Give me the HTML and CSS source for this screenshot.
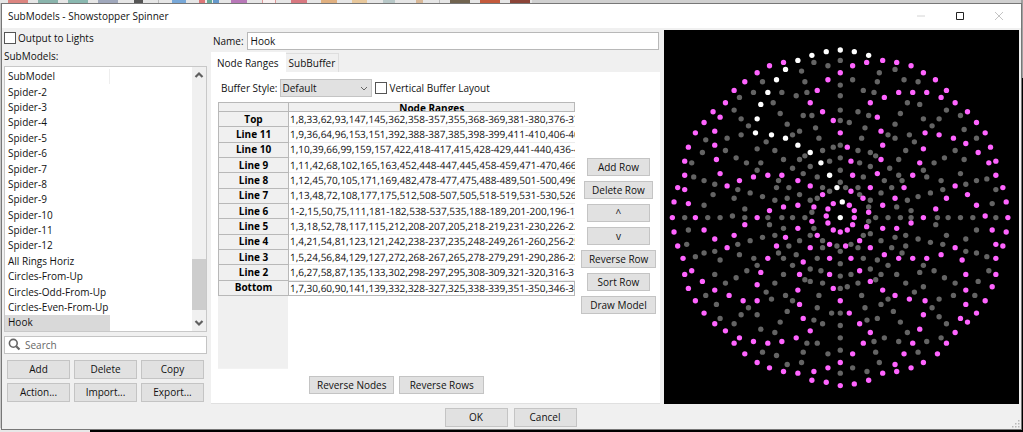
FILE: index.html
```html
<!DOCTYPE html>
<html lang="en">
<head>
<meta charset="utf-8">
<title>SubModels - Showstopper Spinner</title>
<link rel="stylesheet" href="styles.css">
</head>
<body>
<div class="desktop">
  <div class="backdrop" aria-hidden="true">
    <div class="toolstrip">
      <i class="chip red"></i><i class="chip blue"></i><i class="chip teal"></i><i class="chip slate"></i><i class="chip dark"></i><i class="sep"></i><i class="chip sky"></i><i class="chip mixed"></i><i class="chip violet"></i><i class="chip white"></i><i class="chip rose"></i><i class="chip tan"></i><i class="chip sand"></i><i class="chip pale"></i><i class="chip pencil"></i><i class="sep"></i><i class="chip olive"></i><i class="chip orange"></i><i class="chip brick"></i>
    </div>
  </div>
  <main class="dialog">
    <header class="titlebar">
      <h1 class="title">SubModels - Showstopper Spinner</h1>
      <button class="winbtn" aria-label="Minimize"><svg width="10" height="10" viewBox="0 0 10 10"><path d="M1 5h8" stroke="#d4d4d4"/></svg></button>
      <button class="winbtn" aria-label="Maximize"><svg width="10" height="10" viewBox="0 0 10 10"><path d="M1.5 1.5h7v7h-7z" fill="none" stroke="#222"/></svg></button>
      <button class="winbtn" aria-label="Close"><svg width="10" height="10" viewBox="0 0 10 10"><path d="M1 1l8 8M9 1l-8 8" stroke="#c4c4c4"/></svg></button>
    </header>
    <div class="content">
      <section class="models">
        <label class="check"><input type="checkbox" class="box">Output to Lights</label>
        <div class="caption" id="models-caption">SubModels:</div>
        <div class="listbox">
          <ul class="items" role="listbox" aria-labelledby="models-caption">
            <li role="option">SubModel</li>
            <li role="option">Spider-2</li>
            <li role="option">Spider-3</li>
            <li role="option">Spider-4</li>
            <li role="option">Spider-5</li>
            <li role="option">Spider-6</li>
            <li role="option">Spider-7</li>
            <li role="option">Spider-8</li>
            <li role="option">Spider-9</li>
            <li role="option">Spider-10</li>
            <li role="option">Spider-11</li>
            <li role="option">Spider-12</li>
            <li role="option">All Rings Horiz</li>
            <li role="option">Circles-From-Up</li>
            <li role="option">Circles-Odd-From-Up</li>
            <li role="option">Circles-Even-From-Up</li>
            <li role="option" aria-selected="true" class="selected">Hook</li>
          </ul>
          <div class="scrollbar">
            <svg width="10" height="8" viewBox="0 0 10 8"><path d="M1.5 6L5 2.5 8.500 6" fill="none" stroke="#606060" stroke-width="2.200"/></svg>
            <div class="thumb"></div>
            <svg width="10" height="8" viewBox="0 0 10 8"><path d="M1.500 2L5 5.500 8.500 2" fill="none" stroke="#606060" stroke-width="2.200"/></svg>
          </div>
        </div>
        <div class="search">
          <svg width="13" height="13" viewBox="0 0 13 13"><circle cx="5.300" cy="5.300" r="3.900" fill="none" stroke="#666" stroke-width="1.600"/><path d="M8.200 8.200L11.500 11.500" stroke="#666" stroke-width="2.200"/></svg>
          <input type="text" class="search-input" placeholder="Search" aria-label="Search">
        </div>
        <div class="actions">
          <button class="btn">Add</button><button class="btn">Delete</button><button class="btn">Copy</button>
          <button class="btn">Action...</button><button class="btn">Import...</button><button class="btn">Export...</button>
        </div>
      </section>

      <section class="editor">
        <div class="name-row"><label for="name">Name:</label><input type="text" id="name" class="name-input" value="Hook"></div>
        <div class="tabs" role="tablist">
          <button class="tab active" role="tab" aria-selected="true">Node Ranges</button>
          <button class="tab" role="tab" aria-selected="false">SubBuffer</button>
        </div>
        <div class="panel">
          <div class="options">
            <label for="style">Buffer Style:</label>
            <div class="select-wrap">
              <select id="style" class="select"><option>Default</option></select>
              <svg class="caret" width="8" height="5" viewBox="0 0 8 5"><path d="M1 1l3 3 3-3" fill="none" stroke="#666"/></svg>
            </div>
            <label class="check"><input type="checkbox" class="box">Vertical Buffer Layout</label>
          </div>
          <div class="ranges">
            <div class="grid">
              <table class="nodes">
                <thead><tr><th class="rowcol"></th><th><div class="colname">Node Ranges</div></th></tr></thead>
                <tbody>
                  <tr><th>Top</th><td>1,8,33,62,93,147,145,362,358-357,355,368-369,381-380,376-377,</td></tr>
                  <tr><th>Line 11</th><td>1,9,36,64,96,153,151,392,388-387,385,398-399,411-410,406-407,</td></tr>
                  <tr><th>Line 10</th><td>1,10,39,66,99,159,157,422,418-417,415,428-429,441-440,436-437</td></tr>
                  <tr><th>Line 9</th><td>1,11,42,68,102,165,163,452,448-447,445,458-459,471-470,466-467</td></tr>
                  <tr><th>Line 8</th><td>1,12,45,70,105,171,169,482,478-477,475,488-489,501-500,496-497</td></tr>
                  <tr><th>Line 7</th><td>1,13,48,72,108,177,175,512,508-507,505,518-519,531-530,526-527</td></tr>
                  <tr><th>Line 6</th><td>1-2,15,50,75,111,181-182,538-537,535,188-189,201-200,196-197</td></tr>
                  <tr><th>Line 5</th><td>1,3,18,52,78,117,115,212,208-207,205,218-219,231-230,226-227,</td></tr>
                  <tr><th>Line 4</th><td>1,4,21,54,81,123,121,242,238-237,235,248-249,261-260,256-257,</td></tr>
                  <tr><th>Line 3</th><td>1,5,24,56,84,129,127,272,268-267,265,278-279,291-290,286-287,</td></tr>
                  <tr><th>Line 2</th><td>1,6,27,58,87,135,133,302,298-297,295,308-309,321-320,316-317,</td></tr>
                  <tr><th>Bottom</th><td class="current">1,7,30,60,90,141,139,332,328-327,325,338-339,351-350,346-347,</td></tr>
                </tbody>
              </table>
            </div>
            <div class="row-tools">
              <button class="btn">Add Row</button>
              <button class="btn wide">Delete Row</button>
              <button class="btn">^</button>
              <button class="btn">v</button>
              <button class="btn widest">Reverse Row</button>
              <button class="btn">Sort Row</button>
              <button class="btn widest">Draw Model</button>
            </div>
          </div>
          <div class="reverse">
            <button class="btn">Reverse Nodes</button>
            <button class="btn">Reverse Rows</button>
          </div>
        </div>
      </section>

      <section class="preview">
        <svg id="model" class="model" viewBox="0 0 1062 1119" role="img" aria-label="Model preview"></svg>
      </section>
    </div>
    <footer class="footer">
      <button class="btn">OK</button>
      <button class="btn">Cancel</button>
      <svg class="grip" width="8" height="8" viewBox="0 0 8 8" fill="#b8b8b8"><path d="M6 0h1.500v1.500H6zM3 3h1.500v1.500H3zM6 3h1.500v1.500H6zM0 6h1.500v1.500H0zM3 6h1.500v1.500H3zM6 6h1.500v1.500H6z"/></svg>
    </footer>
  </main>
</div>
<script src="model.js"></script>
</body>
</html>
```
FILE: styles.css
```css
* { box-sizing: border-box; }

body {
  margin: 0;
  font-family: "Open Sans", "Noto Sans", sans-serif;
  font-size: 10px;
  line-height: 14px;
  color: #111;
}

button, input, select { font: inherit; color: inherit; margin: 0; }

.desktop {
  position: relative;
  display: flex;
  min-height: 100vh;
  padding: 3px 1px;
}

.backdrop {
  position: absolute;
  inset: 0;
  background:
    linear-gradient(#a0a0a0, #a0a0a0) right top / 2px 78px no-repeat,
    linear-gradient(#e8e8e8, #e8e8e8) left bottom / 90px 5px no-repeat,
    linear-gradient(#c8c8c8, #c8c8c8) left top / 3px 100% no-repeat,
    linear-gradient(#d0d0d0, #d0d0d0) top / 100% 4px no-repeat,
    #000;
}

.toolstrip { display: flex; gap: 10px; width: max-content; padding: 0 2px 0 8px; background: #e6e6e6; }
.chip { width: 20px; height: 3px; }
.sep { width: 1px; height: 3px; background: #bbb; }
.red { background: #dc8580; }
.blue { background: #8ab4ac; }
.teal { background: #8ab8b0; }
.slate { background: #a0a8bc; }
.dark { background: linear-gradient(#555, #555) center / 9px 100% no-repeat; }
.sky { background: linear-gradient(#78a8d8, #78a8d8) center / 14px 100% no-repeat; }
.mixed { background: linear-gradient(90deg, #d77 30%, #eee 30% 40%, #6a9 40% 65%, #eee 65% 72%, #69c 72%); }
.violet { background: linear-gradient(#b878b8, #b878b8) center / 16px 100% no-repeat; }
.white { background: linear-gradient(90deg, #e6e6e6 3px, #e09898 3px 4px, #f8f0f0 4px 16px, #e09898 16px 17px, #e6e6e6 17px); }
.rose { background: linear-gradient(#d87880, #d87880) center / 16px 100% no-repeat; }
.tan { background: linear-gradient(#e0b080, #e0b080) center / 16px 100% no-repeat; }
.sand { background: linear-gradient(#e8c89c, #e8c89c) center / 15px 100% no-repeat; }
.pale { background: linear-gradient(#b8c8c8, #b8c8c8) center / 12px 100% no-repeat; }
.pencil { background: linear-gradient(#d8b898, #d8b898) center / 7px 100% no-repeat; }
.olive { background: #716450; }
.orange { background: #c45a3c; }
.brick { background: #8c4438; }

.dialog {
  position: relative;
  flex: 1;
  min-width: 0;
  display: flex;
  flex-direction: column;
  background: #f0f0f0;
  border: 1px solid #777;
}

.titlebar { display: flex; align-items: center; height: 24px; padding-left: 6px; background: #fff; }
.title { flex: 1; margin: 0; font-size: 10px; font-weight: 400; }
.winbtn { display: flex; align-items: center; justify-content: center; width: 39px; height: 24px; padding: 0 5px 0 0; border: 0; background: none; }

.content {
  flex: 1;
  display: grid;
  grid-template-columns: 203px minmax(0, 450fr) minmax(0, 355fr);
  gap: 4px;
  padding: 2px 2px 0;
}

.btn {
  min-width: 63px;
  height: 18px;
  padding: 0 7px;
  line-height: 14px;
  white-space: nowrap;
  background: #e1e1e1;
  border: 1px solid #c4c4c4;
}

.check { display: flex; align-items: center; gap: 2px; }
.box { appearance: none; width: 12px; height: 12px; background: #fff; border: 1px solid #555; }

.models { display: flex; flex-direction: column; }
.models .check { height: 16px; }
.caption { padding: 3px 0; line-height: 14px; }

.listbox { flex: 1; display: flex; border: 1px solid #c8c8c8; background: #fff; }
.items { flex: 1; display: grid; grid-auto-rows: minmax(0, 1fr); margin: 0; padding: 2px 0 0; list-style: none; }
.items li { display: flex; align-items: center; width: 105px; padding-left: 3px; line-height: 15px; white-space: nowrap; }
.items li:first-child { border-right: 1px solid #eee; }
.items .selected { background: #d9d9d9; }
.scrollbar { display: flex; flex-direction: column; align-items: center; width: 14px; padding: 4px 0; background: #f0f0f0; }
.thumb { width: 14px; height: 51px; margin: auto 0 9px; background: #cdcdcd; }

.search { display: flex; align-items: center; gap: 4px; height: 18px; margin-top: 4px; padding: 0 3px; background: #fff; border: 1px solid #c4c4c4; }
.search-input { flex: 1; min-width: 0; height: 14px; padding: 0; border: 0; outline: 0; background: none; }
.search-input::placeholder { color: #666; opacity: 1; }

.actions { display: grid; grid-template-columns: repeat(3, 1fr); gap: 4px; padding: 6px 3px 2px; }
.actions .btn { height: 19px; min-width: 0; }

.editor { display: flex; flex-direction: column; }
.name-row { display: flex; align-items: center; gap: 3px; padding: 2px 1px 0 2px; }
.name-input { flex: 1; min-width: 0; height: 18px; padding: 0 3px; background: #fff; border: 1px solid #b8b8b8; }

.tabs { display: flex; align-items: flex-end; padding-top: 2px; }
.tab { height: 19px; padding: 0 3px; line-height: 14px; background: #f0f0f0; border: 1px solid #dedede; border-bottom: 0; border-left: 0; white-space: nowrap; }
.tab.active { height: 20px; padding: 0 6px; background: #fff; border-color: #fff; }

.panel { flex: 1; display: flex; flex-direction: column; padding: 7px 4px 9px 7px; background: #fff; border-bottom: 1px solid #e0e0e0; }
.options { display: flex; align-items: center; gap: 3px; padding-left: 3px; }
.select-wrap { position: relative; display: flex; width: 92px; }
.select { appearance: none; width: 100%; height: 18px; padding: 0 1px; background: #e1e1e1; border: 1px solid #c4c4c4; border-radius: 0; }
.caret { position: absolute; right: 4px; top: 7px; }

.ranges { flex: 1; display: flex; gap: 5px; padding-top: 5px; }
.grid { flex: 1; min-width: 0; background: linear-gradient(#f0f0f0, #f0f0f0) left / 70px 100% no-repeat; }

.nodes { width: 100%; height: 194px; table-layout: fixed; border-collapse: separate; border-spacing: 0; border-top: 1px solid #b8b8b8; border-left: 1px solid #b8b8b8; }
.nodes th { padding: 0; height: 15px; line-height: 13px; font-weight: 700; color: #000; background: #f0f0f0; border-right: 1px solid #b8b8b8; border-bottom: 1px solid #b8b8b8; }
.nodes .rowcol { width: 70px; }
.nodes thead th { height: 9px; }
.colname { height: 8px; line-height: 10px; overflow: hidden; }
.nodes td { padding: 0 1px; line-height: 13px; background: #fff; border-bottom: 1px solid #ececec; overflow: hidden; white-space: nowrap; text-rendering: geometricPrecision; }
.nodes .current { border: 1px solid #b8b8b8; border-left: 0; }

.row-tools { display: flex; flex-direction: column; align-items: center; justify-content: center; gap: 5px; width: 76px; padding-top: 2px; }
.row-tools .wide { width: 69px; }
.row-tools .widest { width: 75px; }
.reverse { display: flex; justify-content: center; gap: 5px; padding: 7px 81px 0 0; }
.reverse .btn { width: 85px; padding: 0; }

.preview { display: flex; background: #000; }
.model { flex: 1; min-width: 0; display: block; }

.footer { position: relative; display: flex; justify-content: center; gap: 6px; padding: 4px 2px 2px 0; }
.footer .btn { height: 19px; }
.grip { position: absolute; right: 1px; bottom: 1px; }
```
FILE: model.js
```js
// Node positions of the model, listed per quadrant with the quadrant's origin.
const quadrants = [
  { x: -12, y: 0,
    on: "370,97 328,107 291,128 254,155 222,181 196,218 159,245 180,261 132,277 106,308 164,303 164,345 85,351 169,388 74,393 74,435 180,430 53,472 74,478 42,515 85,520 37,562 106,562 201,467 238,451 280,440 323,435 365,435 413,451 450,467 487,493 519,520 328,541 370,530 413,525 461,530 503,536 498,557 291,562 503,149 471,181 450,218 487,245 519,271",
    lit: "413,91 455,76 498,65 376,118 349,149 323,187 302,223 291,266 286,308 334,314 376,324 413,345 450,367 482,398 508,435 530,472",
    off: "461,97 503,107 424,123 434,155 307,155 280,187 238,202 365,187 408,197 440,187 339,218 222,240 360,250 429,256 455,256 243,266 265,287 381,282 466,293 418,303 243,314 397,314 201,324 137,329 318,335 476,324 519,351 487,361 127,367 196,361 291,356 344,361 228,383 434,377 418,388 370,388 95,398 259,398 302,398 508,393 450,409 397,414 291,420 429,430 471,440 101,440 132,451 164,462 355,451 349,472 386,472 487,472 508,483 159,493 222,504 233,478 270,488 307,499 418,493 381,504 344,510 450,510 471,504 132,525 254,536 455,546 217,557 74,562 143,562 180,562 254,562 323,562 365,562 397,562 434,562" },
  { x: 522, y: 0,
    on: "6,128 43,107 85,97 133,91 175,97 218,107 255,128 291,149 324,181 308,202 350,218 387,245 414,277 440,308 456,351 472,393 451,398 419,367 382,340 345,324 302,314 260,308 181,187 223,187 265,187 138,202 96,218 117,261 128,303 133,345 128,388 117,430 96,472 74,504 6,308 27,351 38,393 43,435 38,483 33,525 48,541 48,562 91,546 255,356 244,398 223,435 197,472 170,504 133,525 472,435 493,472 503,515 508,562 440,557 414,525 387,493 350,467 324,504 292,536 255,562",
    lit: "6,60 48,65 91,76 12,515 6,562",
    off: "6,91 6,165 6,197 6,240 6,271 6,345 6,383 6,420 6,456 43,149 75,181 107,187 117,155 123,128 170,118 197,149 239,155 207,218 244,223 186,250 59,245 91,256 33,277 80,293 170,282 149,314 170,324 213,314 228,335 70,324 202,361 59,361 96,367 112,377 64,398 96,409 181,388 154,414 181,435 191,451 138,451 75,440 22,472 59,472 64,493 96,510 91,530 128,488 160,472 175,530 218,541 207,510 239,499 276,488 313,478 308,451 265,440 255,420 287,398 318,383 350,361 377,388 366,430 382,462 414,451 445,446 472,478 461,520 414,324 377,298 366,256 324,240 302,266 281,287 255,266 112,562 149,562 186,562 218,562 297,562 329,562 366,562 403,562 472,562" },
  { x: -12, y: 555,
    on: "42,50 132,44 164,71 53,92 201,97 222,60 254,28 69,129 74,177 95,166 127,198 85,219 164,224 207,240 106,256 249,256 291,256 132,293 164,325 196,346 238,367 222,383 254,415 280,378 323,383 365,378 408,367 450,346 429,309 418,267 413,224 418,177 429,140 450,97 471,60 503,23 455,18 413,39 376,66 349,92 323,129 302,171 291,208 519,44 508,87 508,129 508,177 519,219 291,441 328,457 370,468 413,473 461,468 503,457 455,494 498,500",
    lit: "",
    off: "85,44 328,28 370,39 344,60 307,66 270,76 233,87 461,39 450,60 418,76 487,76 487,97 386,92 80,87 132,113 164,108 106,124 180,134 238,118 355,113 370,129 408,118 281,129 291,150 397,150 471,129 450,161 482,166 260,166 164,177 228,187 370,177 434,193 450,198 196,203 344,203 487,203 318,230 137,240 376,240 334,251 476,240 397,256 169,267 265,277 471,277 381,288 243,298 291,298 514,293 180,309 222,325 360,320 461,314 487,325 302,341 344,351 440,383 471,383 307,410 349,420 429,410 503,415 381,447 424,441 530,92" },
  { x: 522, y: 555,
    on: "6,50 27,44 43,28 85,34 64,76 22,92 96,97 38,129 64,166 96,198 133,224 170,240 213,251 260,256 255,298 244,341 223,383 197,415 170,447 175,468 133,473 91,494 48,505 218,457 255,441 297,415 324,383 350,351 387,320 366,309 414,293 440,256 382,267 382,224 382,177 371,134 350,97 308,118 265,129 223,129 181,129 138,118 133,39 175,39 218,23 461,214 472,177 472,129 493,92 472,87 461,44 503,50 6,256 33,293 64,325 96,351 75,383 43,415 6,441 6,510",
    lit: "",
    off: "6,108 6,145 6,182 6,219 6,293 6,330 6,367 6,404 6,473 91,18 75,60 96,55 128,76 170,66 202,60 239,71 276,81 313,87 292,28 324,60 382,71 414,44 382,108 414,113 445,124 451,166 419,198 409,240 345,240 350,203 318,187 287,166 255,150 244,171 255,214 228,230 202,203 175,177 202,92 191,113 160,97 117,134 149,150 128,177 112,193 96,161 75,129 38,87 59,97 38,177 59,203 27,214 70,240 80,277 86,314 117,309 128,267 149,251 165,288 186,320 207,351 138,367 107,378 112,410 181,378 239,410 265,378 308,367 324,325 302,304 281,277 302,251 123,441 43,457 86,468" }
];
const colors = { off: "#646464", on: "#ff64ff", lit: "#ffffff" };
const svg = document.getElementById("model");
for (const q of quadrants) {
  for (const state of ["off", "on", "lit"]) {
    for (const pair of q[state].split(" ").filter(Boolean)) {
      const [x, y] = pair.split(",").map(Number);
      const dot = document.createElementNS("http://www.w3.org/2000/svg", "circle");
      dot.setAttribute("cx", x + q.x);
      dot.setAttribute("cy", y + q.y);
      dot.setAttribute("r", 8);
      dot.setAttribute("fill", colors[state]);
      svg.appendChild(dot);
    }
  }
}
```
